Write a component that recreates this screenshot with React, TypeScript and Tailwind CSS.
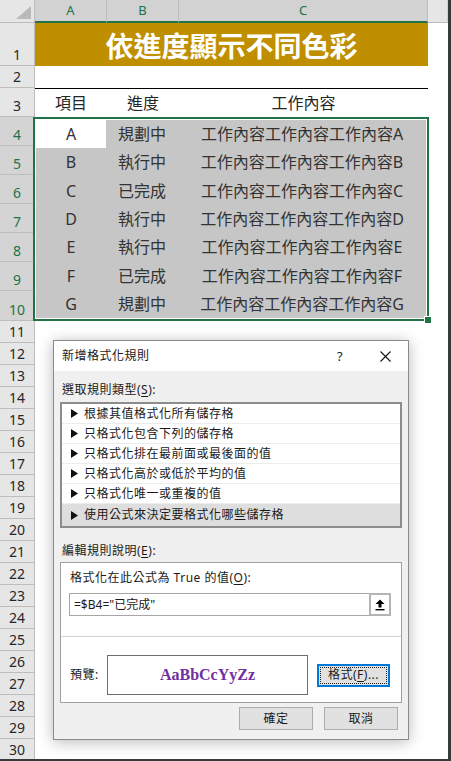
import React from 'react'

const data = [
  ['A', '規劃中', '工作內容工作內容工作內容A'],
  ['B', '執行中', '工作內容工作內容工作內容B'],
  ['C', '已完成', '工作內容工作內容工作內容C'],
  ['D', '執行中', '工作內容工作內容工作內容D'],
  ['E', '執行中', '工作內容工作內容工作內容E'],
  ['F', '已完成', '工作內容工作內容工作內容F'],
  ['G', '規劃中', '工作內容工作內容工作內容G'],
]

const rules = [
  '根據其值格式化所有儲存格',
  '只格式化包含下列的儲存格',
  '只格式化排在最前面或最後面的值',
  '只格式化高於或低於平均的值',
  '只格式化唯一或重複的值',
  '使用公式來決定要格式化哪些儲存格',
]

function RowNum({ n, cls = 'h-[22px]', sel = false }: { n: number; cls?: string; sel?: boolean }) {
  return (
    <div
      className={`${cls} w-[35px] shrink-0 flex items-end justify-center pb-[3px] border-b border-r border-[#bdbdbd] text-[14px] leading-none font-['Noto_Sans',sans-serif] ${
        sel ? 'bg-[#d4d4d4] text-[#217346]' : 'bg-[#e6e6e6] text-[#262626]'
      }`}
    >
      {n}
    </div>
  )
}

function Key({ k }: { k: string }) {
  return <span className="underline underline-offset-2">{k}</span>
}

export default function App() {
  const lower = Array.from({ length: 20 }, (_, i) => i + 11)

  return (
    <div className="relative w-[451px] h-[761px] overflow-hidden bg-white border-r-[3px] border-b-2 border-[#3a3a3a] font-['Noto_Sans','Noto_Sans_CJK_TC',sans-serif]">
      {/* column headers */}
      <div className="flex h-[23px] text-[13px] leading-none">
        <div className="w-[35px] shrink-0 bg-[#e6e6e6] border-r border-b border-[#bdbdbd] flex items-end justify-end p-[3px]">
          <svg width="15" height="13" viewBox="0 0 15 13">
            <polygon points="15,0 15,13 0,13" fill="#b9b9b9" />
          </svg>
        </div>
        <div className="w-[72px] shrink-0 bg-[#d2d2d2] text-[#217346] border-r border-[#bdbdbd] border-b-2 border-b-[#217346] flex items-center justify-center">A</div>
        <div className="w-[72px] shrink-0 bg-[#d2d2d2] text-[#217346] border-r border-[#bdbdbd] border-b-2 border-b-[#217346] flex items-center justify-center">B</div>
        <div className="w-[249px] shrink-0 bg-[#d2d2d2] text-[#217346] border-r border-[#bdbdbd] border-b-2 border-b-[#217346] flex items-center justify-center">C</div>
        <div className="flex-1 bg-[#e6e6e6] border-b border-[#bdbdbd] border-r border-r-[#d0d0d0]" />
      </div>

      {/* row 1 - title */}
      <div className="flex h-[43px]">
        <RowNum n={1} cls="h-[43px]" />
        <div className="w-[393px] shrink-0 bg-[#bf8f00] flex items-center justify-center text-white font-bold text-[28px] leading-none font-['Noto_Sans_CJK_TC',sans-serif]">
          依進度顯示不同色彩
        </div>
        <div className="flex-1" />
      </div>

      {/* row 2 */}
      <div className="flex h-[22px]">
        <RowNum n={2} />
      </div>

      {/* row 3 - headings */}
      <div className="flex h-[29px]">
        <RowNum n={3} cls="h-[29px]" />
        <div className="w-[393px] shrink-0 border-t border-black flex text-[16px] leading-none text-[#262626]">
          <div className="w-[72px] flex items-center justify-center">項目</div>
          <div className="w-[72px] flex items-center justify-center">進度</div>
          <div className="flex-1 flex items-center justify-center">工作內容</div>
        </div>
      </div>

      {/* rows 4-10 - selected range */}
      <div className="flex h-[204px]">
        <div className="flex flex-col w-[35px] shrink-0">
          {[4, 5, 6, 7, 8, 9].map((n) => (
            <RowNum key={n} n={n} sel cls="h-[29px]" />
          ))}
          <RowNum n={10} sel cls="h-[30px]" />
        </div>
        <div className="relative -ml-[2px] w-[396px] shrink-0 border-2 border-[#217346]">
          <div className="h-full border border-white grid grid-cols-[70px_72px_1fr] grid-rows-7 bg-[#c6c6c6] text-[16px] leading-none text-[#333]">
            {data.map((r, i) => (
              <React.Fragment key={r[0]}>
                <div className={`flex items-center justify-center ${i === 0 ? 'bg-white' : ''}`}>{r[0]}</div>
                <div className="flex items-center justify-center">{r[1]}</div>
                <div className="flex items-center justify-center">{r[2]}</div>
              </React.Fragment>
            ))}
          </div>
          <div className="absolute -right-[5px] -bottom-[5px] w-[8px] h-[8px] bg-[#217346] border border-white" />
        </div>
        <div className="flex-1" />
      </div>

      {/* rows 11-30 */}
      {lower.map((n) => (
        <div key={n} className="flex h-[22px]">
          <RowNum n={n} />
        </div>
      ))}

      {/* dialog */}
      <div className="absolute left-[53px] top-[340px] w-[356px] h-[400px] border border-[#8a8a8a] bg-[#f0f0f0] flex flex-col shadow-[0_2px_14px_rgba(0,0,0,0.28)] text-[12px] tracking-[0.5px] leading-[14px] text-[#1a1a1a]">
        <div className="h-[30px] bg-white flex items-center pl-[8px]">
          <span className="flex-1">新增格式化規則</span>
          <span className="w-[20px] text-center text-[13px] mr-[12px]">?</span>
          <span className="w-[46px] h-full flex items-center justify-center">
            <svg width="11" height="11" viewBox="0 0 11 11">
              <path d="M0.5 0.5 L10.5 10.5 M10.5 0.5 L0.5 10.5" stroke="#111" strokeWidth="1.1" />
            </svg>
          </span>
        </div>

        <div className="flex-1 flex flex-col px-[6px] pt-[12px] pb-[9px]">
          <div className="h-[14px] pl-[2px]">
            選取規則類型(<Key k="S" />):
          </div>

          <div className="mt-[5px] h-[126px] border-2 border-[#8c8c8c] bg-white flex flex-col">
            {rules.map((r, i) => (
              <div
                key={r}
                className={`flex items-center gap-[6px] pl-[9px] ${
                  i === rules.length - 1 ? 'flex-1 bg-[#dedede]' : 'h-[20px] border-b border-[#ececec]'
                }`}
              >
                <svg width="7" height="9" viewBox="0 0 7 9">
                  <polygon points="0,0 7,4.5 0,9" fill="#111" />
                </svg>
                <span>{r}</span>
              </div>
            ))}
          </div>

          <div className="mt-[16px] h-[14px] pl-[2px]">
            編輯規則說明(<Key k="E" />):
          </div>

          <div className="mt-[4px] h-[141px] border border-[#a0a0a0] bg-white flex flex-col px-[8px] pt-[8px]">
            <div className="h-[14px] pl-[1px]">
              格式化在此公式為 True 的值(<Key k="O" />):
            </div>
            <div className="mt-[8px] w-[322px] h-[23px] flex border-y border-l border-[#a6a6a6]">
              <div className="flex-1 flex items-center pl-[4px] tracking-normal">=$B4="已完成"</div>
              <div className="w-[22px] h-[23px] -my-[1px] border-2 border-[#b4b4b4] bg-white flex items-center justify-center">
                <svg width="10" height="12" viewBox="0 0 10 12">
                  <polygon points="5,0.5 9.5,5 6.5,5 6.5,8.5 3.5,8.5 3.5,5 0.5,5" fill="#000" />
                  <rect x="0.5" y="10" width="9" height="1.4" fill="#000" />
                </svg>
              </div>
            </div>
            <div className="mt-[20px] -mx-[8px] h-px bg-[#d4d4d4]" />
            <div className="mt-[18px] flex items-center">
              <div className="w-[38px] pl-[1px]">預覽:</div>
              <div className="w-[201px] h-[40px] border border-[#6d6d6d] flex items-center justify-center font-['Liberation_Serif',serif] font-bold text-[16px] tracking-normal text-[#7030a0]">
                AaBbCcYyZz
              </div>
              <div className="ml-[9px] w-[73px] h-[23px] border-2 border-[#0078d7] bg-[#e1e1e1] p-px">
                <div className="h-full border border-dotted border-[#222] flex items-center justify-center">
                  格式(<Key k="F" />)...
                </div>
              </div>
            </div>
          </div>

          <div className="mt-[4px] flex justify-end gap-[11px] pr-[4px]">
            <div className="w-[74px] h-[23px] border border-[#adadad] bg-[#e1e1e1] flex items-center justify-center">確定</div>
            <div className="w-[74px] h-[23px] border border-[#adadad] bg-[#e1e1e1] flex items-center justify-center">取消</div>
          </div>
        </div>
      </div>
    </div>
  )
}
